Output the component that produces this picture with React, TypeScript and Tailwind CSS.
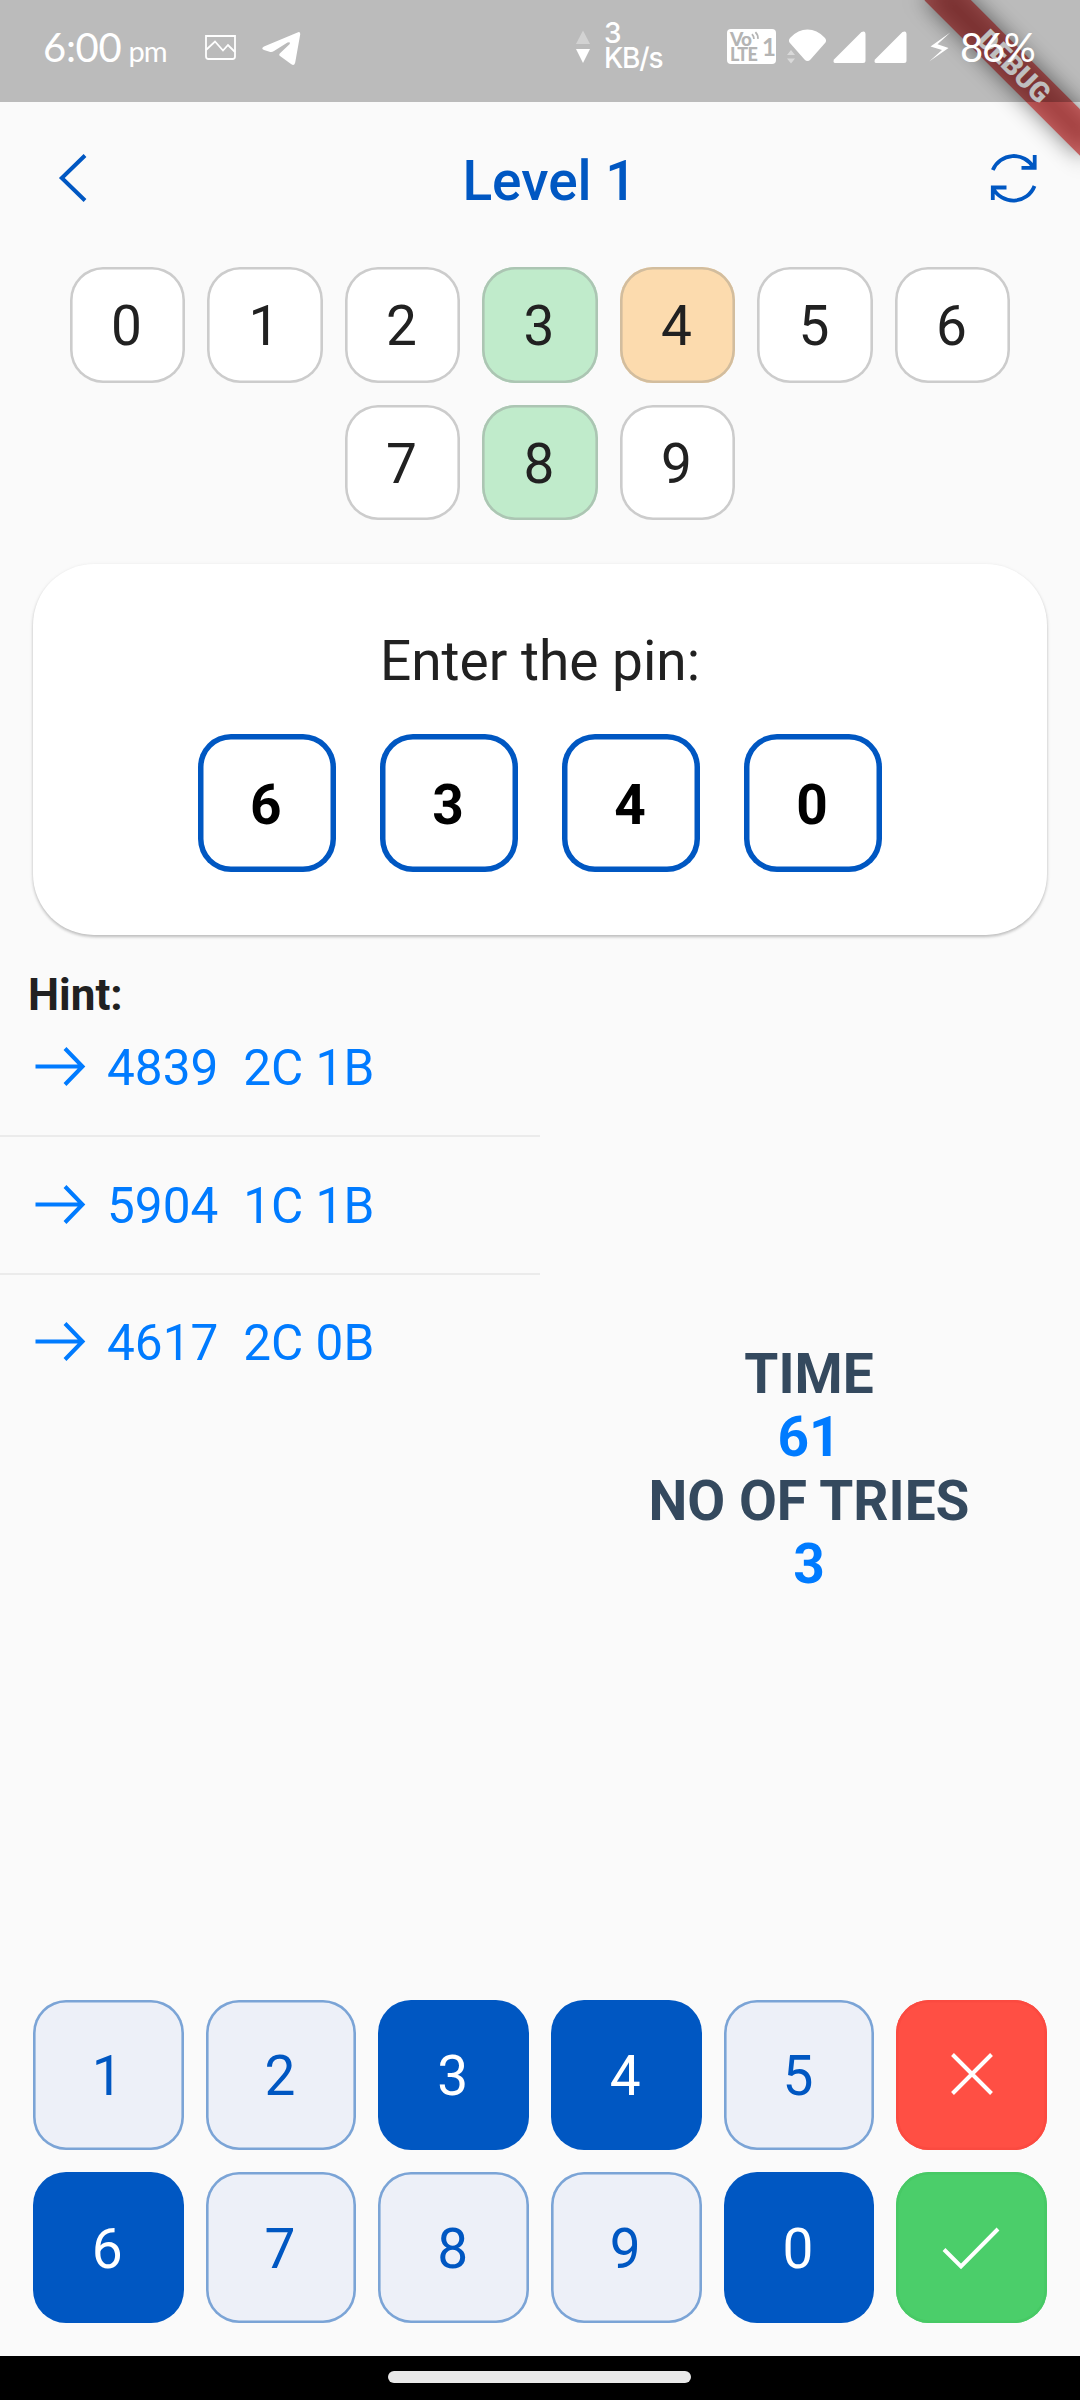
import type { ReactNode } from 'react';

type ChipTone = 'plain' | 'green' | 'orange';

const chipTones: Record<ChipTone, string> = {
  plain: 'bg-white shadow-[inset_0_0_0_2.6px_#cccccc]',
  green: 'bg-[#c0ebcb] shadow-[inset_0_0_0_2.6px_#acc5b3]',
  orange: 'bg-[#fcdbae] shadow-[inset_0_0_0_2.6px_#d2bd9e]',
};

const chips: { n: number; tone: ChipTone }[] = [
  { n: 0, tone: 'plain' },
  { n: 1, tone: 'plain' },
  { n: 2, tone: 'plain' },
  { n: 3, tone: 'green' },
  { n: 4, tone: 'orange' },
  { n: 5, tone: 'plain' },
  { n: 6, tone: 'plain' },
  { n: 7, tone: 'plain' },
  { n: 8, tone: 'green' },
  { n: 9, tone: 'plain' },
];

const pin = [6, 3, 4, 0];

const hints = [
  { code: '4839', result: '2C 1B' },
  { code: '5904', result: '1C 1B' },
  { code: '4617', result: '2C 0B' },
];

function Chip({ n, tone }: { n: number; tone: ChipTone }) {
  return (
    <div
      className={`flex h-[115.5px] w-[115.5px] items-center justify-center rounded-[33px] pt-[4px] pr-[2px] text-[55px] leading-none text-[#212121] ${chipTones[tone]}`}
    >
      {n}
    </div>
  );
}

function Key({ children, kind }: { children: ReactNode; kind: 'idle' | 'used' | 'cancel' | 'confirm' }) {
  const kinds = {
    idle: 'bg-[#edf0f8] shadow-[inset_0_0_0_2.6px_#7ba4d6] text-[#0057c2]',
    used: 'bg-[#0057c2] text-white',
    cancel: 'bg-[#ff4f44] shadow-[inset_0_0_0_2.6px_#fb4a40] text-white',
    confirm: 'bg-[#4bce6a] shadow-[inset_0_0_0_2.6px_#47c965] text-white',
  };
  return (
    <button
      className={`flex h-[150.67px] items-center justify-center rounded-[33px] pt-[3px] pr-[2px] text-[55px] leading-none ${kinds[kind]}`}
    >
      {children}
    </button>
  );
}

function DebugRibbon() {
  return (
    <div className="pointer-events-none absolute top-0 right-0 z-10 h-[240px] w-[240px] overflow-hidden">
      <div className="absolute top-[49.6px] left-[63.9px] h-[33px] w-[220px] rotate-45">
        <div className="absolute inset-0 bg-black/50 blur-[11px]" />
        <div className="absolute inset-0 flex items-center justify-center bg-[#b71c1c]/63 text-[28px] leading-none font-black text-white">
          DEBUG
        </div>
      </div>
    </div>
  );
}

function StatusBar() {
  return (
    <div className="relative z-20 flex h-[102px] w-full shrink-0 bg-black/25 font-['Lato'] text-white">
      <div className="mt-[28px] ml-[43px] flex w-[131px] items-baseline leading-[39px]">
        <span className="text-[40px] tracking-[-0.3px]">6:00</span>
        <span className="ml-[7px] text-[29px] tracking-[-0.8px]">pm</span>
      </div>
      <svg className="mt-[34px] ml-[30px]" width="33" height="28" viewBox="0 0 33 28" fill="none" stroke="white" strokeWidth="1.8">
        <path d="M2 2H31V22.5Q31 25 28.500 25H4.500Q2 25 2 22.500Z" />
        <path d="M2 16L11 7.500L19 16.500L24 11L31 18" />
      </svg>
      <svg className="mt-[31px] ml-[24px]" width="40" height="36" viewBox="0 0 40 36" fill="white">
        <path d="M36.500 1.400Q39.500 0.200 39.200 3.500L34.200 31.500Q33.500 35.500 30 33L19 25Q17.500 23.800 19 22.300L28.500 13.200Q30 10.500 26.500 11.500L13 20Q11 21.300 8.500 20.700L3 19Q-0.500 17.500 3 15.500Z" />
      </svg>
      <svg className="mt-[30px] ml-[274px]" width="16" height="34" viewBox="0 0 16 34" fill="white">
        <path d="M8 0.500L15 14H1Z" opacity=".35" />
        <path d="M8 33L15 19H1Z" />
      </svg>
      <div className="mt-[21px] ml-[13px] w-[70px] font-['Inter'] text-[28px] leading-[24.500px] font-medium tracking-[-1.200px]">
        3<br />KB/s
      </div>
      <div className="mt-[29px] ml-[53px] flex h-[35px] w-[49px] rounded-[4px] bg-white font-['Lato'] font-black text-[#b4b4b4]">
        <div className="ml-[3px] w-[30px] pt-[2px] text-[19px] leading-[15.500px] tracking-[-0.800px]">
          <div className="flex">
            Vo
            <svg className="-mt-px" width="9" height="12" viewBox="0 0 9 12" fill="none" stroke="#b4b4b4" strokeWidth="1.800">
              <path d="M1 4Q3 6 3 9M4.500 2Q7.500 5 7 9" />
            </svg>
          </div>
          <div className="text-[18px] leading-[15.500px] tracking-[-0.600px]">LTE</div>
        </div>
        <div className="ml-[2px] pt-[5px] text-[24px] leading-[25px] font-bold">1</div>
      </div>
      <svg className="mt-[28px] ml-[10px]" width="42" height="38" viewBox="0 0 42 38" fill="white">
        <path d="M3.500 14.500Q2 12 4.500 9.500Q12 1.500 21.500 1.500T38.500 9.500Q41 12 39.500 14.500L24.500 31.500Q21.500 34.500 18.500 31.500Z" />
        <path d="M5 22L9 27H1ZM5 35.500L9 30.500H1Z" opacity=".45" />
      </svg>
      <svg className="mt-[31px] ml-[5px]" width="33" height="33" viewBox="0 0 33 33" fill="white">
        <path d="M28.500 1Q32.500-1 32.500 3.500V29.500Q32.500 32 30 32H2.500Q-0.500 32 1 28.500Z" />
      </svg>
      <svg className="mt-[31px] ml-[8px]" width="33" height="33" viewBox="0 0 33 33" fill="white">
        <path d="M28.500 1Q32.500-1 32.500 3.500V29.500Q32.500 32 30 32H2.500Q-0.500 32 1 28.500Z" />
      </svg>
      <svg className="mt-[32px] ml-[21px]" width="24" height="31" viewBox="0 0 24 31" fill="white">
        <path d="M22.300 0.500L2.500 14.600L14 18L1.200 29.600L20.500 16L9.500 12.300Z" />
      </svg>
      <div className="mt-[28px] ml-[8px] text-[40px] leading-[39px] tracking-[-1.300px]">86%</div>
    </div>
  );
}

function HintRow({ code, result, last }: { code: string; result: string; last: boolean }) {
  return (
    <div
      className={`flex h-[137.67px] w-full items-center border-b-2 pl-[35px] text-[49.5px] leading-none text-[#007bff] ${
        last ? 'border-transparent' : 'border-[#ebebeb]'
      }`}
    >
      <svg width="51" height="40" viewBox="0 0 51 40" fill="none" stroke="currentColor" strokeWidth="4">
        <path d="M0.500 19.500H47M30 1.500L47.500 19.500L30 37.500" />
      </svg>
      <span className="ml-[21px] pt-[3px]">{code}</span>
      <span className="ml-[25px] pt-[3px]">{result}</span>
    </div>
  );
}

export default function App() {
  return (
    <div className="relative flex h-[2400px] w-[1080px] flex-col overflow-hidden bg-[#fafafa] font-['Roboto',sans-serif]">
      <DebugRibbon />
      <StatusBar />

      <header className="flex h-[154px] shrink-0 items-center justify-between pr-[42px] pl-[58px] text-[#0057c2]">
        <svg width="50" height="50" viewBox="0 0 50 50" fill="none" stroke="currentColor" strokeWidth="4">
          <path d="M27 1.500L3.800 24L27 46.500" />
        </svg>
        <h1 className="pt-[4px] pl-[3px] text-[55px] leading-none font-medium">Level 1</h1>
        <svg width="50" height="52" viewBox="0 0 50 52" fill="none" stroke="currentColor" strokeWidth="3.800">
          <path d="M4.800 17A22.700 22.700 0 0 1 45.500 14.500M46.700 2V14.900H33.500" />
          <path d="M46.500 33A22.700 22.700 0 0 1 5 35M4.800 47V34.500H18.500" />
        </svg>
      </header>

      <section className="mt-[11px] flex flex-wrap justify-center gap-[22px] px-[60px]">
        {chips.map((c) => (
          <Chip key={c.n} n={c.n} tone={c.tone} />
        ))}
      </section>

      <section className="mx-[33px] mt-[44px] flex h-[371px] shrink-0 flex-col items-center rounded-[61px] bg-white shadow-[0_2px_3px_rgba(0,0,0,0.20),0_1px_4px_rgba(0,0,0,0.08)]">
        <p className="mt-[67px] text-[55px] leading-[60px] text-[#212121]">Enter the pin:</p>
        <div className="mt-[43px] flex gap-[44.6px]">
          {pin.map((d, i) => (
            <div
              key={i}
              className="flex h-[137.5px] w-[137.5px] items-center justify-center rounded-[33px] pt-[5px] pr-[2px] text-[55px] leading-none font-bold text-black shadow-[inset_0_0_0_5.5px_#0057c2]"
            >
              {d}
            </div>
          ))}
        </div>
      </section>

      <section className="flex min-h-0 flex-1">
        <div className="w-[540px]">
          <h2 className="mt-[34px] h-[30.3px] pl-[28px] text-[44px] leading-[52px] font-bold text-[#212121]">Hint:</h2>
          {hints.map((h, i) => (
            <HintRow key={h.code} code={h.code} result={h.result} last={i === hints.length - 1} />
          ))}
        </div>
        <div className="flex flex-1 flex-col items-center pt-[408px] pr-[2px] text-[55px] leading-[63.4px] font-bold text-[#34495e]">
          <div>TIME</div>
          <div className="text-[#007bff]">61</div>
          <div>NO OF TRIES</div>
          <div className="text-[#007bff]">3</div>
        </div>
      </section>

      <section className="mx-[33px] mb-[33px] grid shrink-0 grid-cols-6 gap-[22px]">
        <Key kind="idle">1</Key>
        <Key kind="idle">2</Key>
        <Key kind="used">3</Key>
        <Key kind="used">4</Key>
        <Key kind="idle">5</Key>
        <Key kind="cancel">
          <svg className="-mt-[5px] ml-[2px]" width="44" height="44" viewBox="0 0 44 44" fill="none" stroke="currentColor" strokeWidth="4">
            <path d="M2.500 2.500L41.500 41.500M41.500 2.500L2.500 41.500" />
          </svg>
        </Key>
        <Key kind="used">6</Key>
        <Key kind="idle">7</Key>
        <Key kind="idle">8</Key>
        <Key kind="idle">9</Key>
        <Key kind="used">0</Key>
        <Key kind="confirm">
          <svg className="-mt-[3px] ml-[1px]" width="58" height="44" viewBox="0 0 58 44" fill="none" stroke="currentColor" strokeWidth="4">
            <path d="M2 23.500L19 40.500L56 3" />
          </svg>
        </Key>
      </section>

      <footer className="flex h-[44px] shrink-0 justify-center bg-black pt-[15px] pr-px">
        <div className="h-[12px] w-[303px] rounded-full bg-[#e9e9e9]" />
      </footer>
    </div>
  );
}
